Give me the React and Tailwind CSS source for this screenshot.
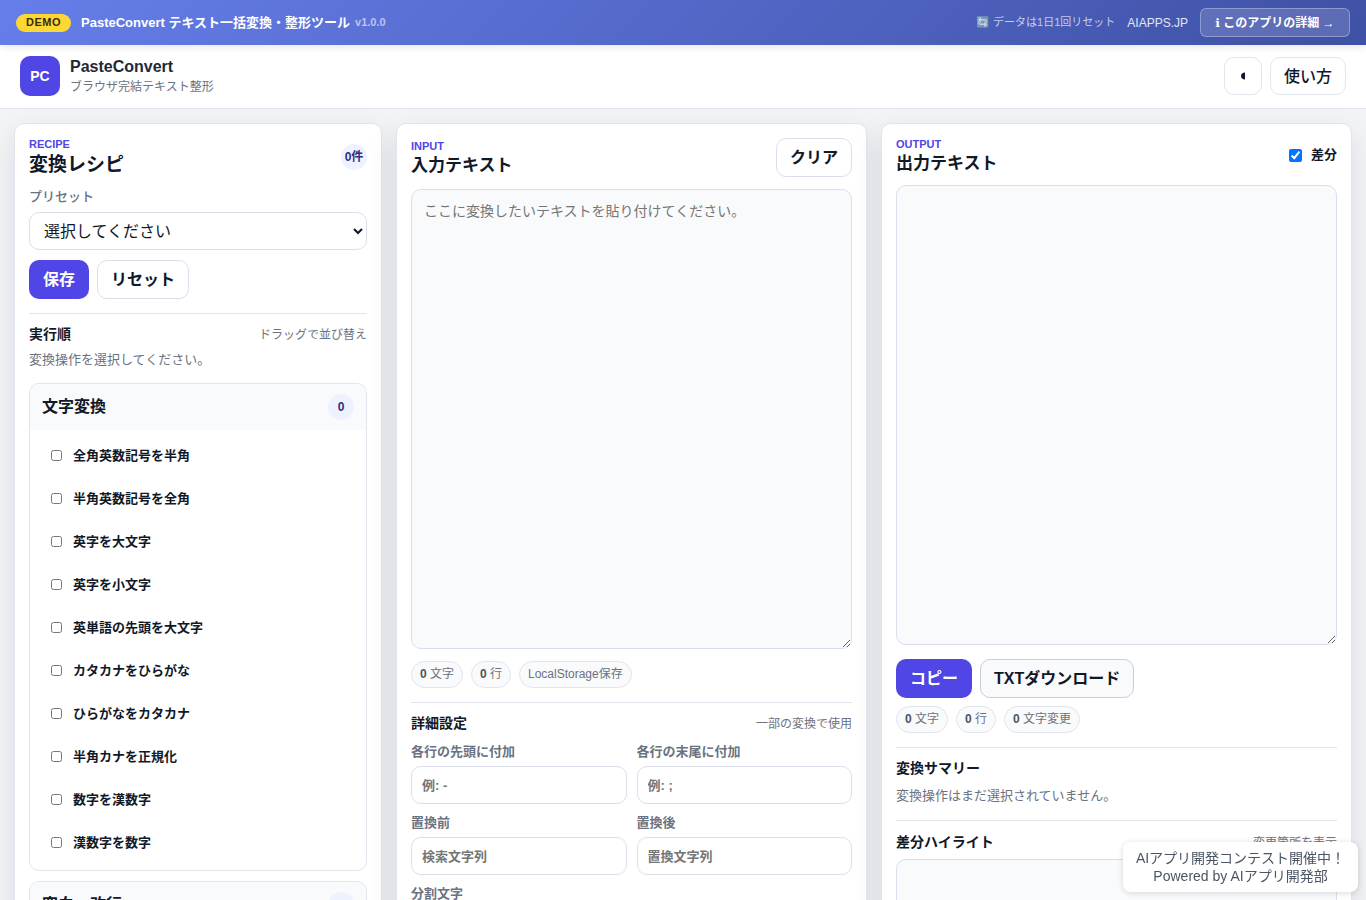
const ops = ["全角英数記号を半角","半角英数記号を全角","英字を大文字","英字を小文字","英単語の先頭を大文字","カタカナをひらがな","ひらがなをカタカナ","半角カナを正規化","数字を漢数字","漢数字を数字"];

function Eyebrow({ children }) {
  return <div className="text-[11px] leading-[12px] mb-[3px] font-bold text-[#4f46e5]">{children}</div>;
}
function Pill({ n, label }) {
  return (
    <span className="h-[27px] px-2 pb-px rounded-full border border-[#e2e4ee] bg-[#f8fafc] text-[12px] text-[#6b7280] flex items-center gap-[3.3px]">
      {n && <b className="text-[#4b5563]">{n}</b>}<span>{label}</span>
    </span>
  );
}
function Field({ label, placeholder }) {
  return (
    <div className="flex flex-col gap-[5px] min-w-0">
      <label className="text-[13px] leading-[19px] font-semibold text-[#6b7280]">{label}</label>
      <input placeholder={placeholder} className="w-full h-[38px] px-[10px] rounded-[10px] border border-[#dcdfeb] bg-white text-[13px] font-semibold placeholder:text-[#757575] outline-none" />
    </div>
  );
}
const Card = ({ children }) => (
  <section className="rounded-[10px] border border-[#e2e4ee] bg-white p-[14px] shadow-[0_10px_30px_rgba(15,23,42,0.1)] min-w-0">{children}</section>
);

export default function App() {
  return (
    <div className="h-screen overflow-hidden bg-[#f3f4f6] text-[#111827] font-['Liberation_Sans','Noto_Sans_CJK_JP',sans-serif]">
      <header className="relative z-10 h-[45px] px-4 flex items-center justify-between text-white bg-[linear-gradient(135deg,#667eea,#3f51a5)] shadow-[0_2px_8px_rgba(0,0,0,0.1)]">
        <div className="flex items-center gap-[10px]">
          <span className="h-[18px] px-[10px] rounded-full bg-[#fdd835] text-[#3b2a06] text-[11px] font-bold tracking-[0.5px] flex items-center">DEMO</span>
          <span className="text-[13px] font-semibold">PasteConvert テキスト一括変換・整形ツール</span>
          <span className="text-[11px] font-semibold text-white/60 -ml-[5px]">v1.0.0</span>
        </div>
        <div className="flex items-center gap-3">
          <span className="text-[11px] text-white/70">🔄 データは1日1回リセット</span>
          <span className="text-[12px] text-white/85">AIAPPS.JP</span>
          <button className="h-[29px] w-[150px] rounded-[6px] border border-white/30 bg-white/15 text-[12px] font-semibold"><span className="font-['DejaVu_Sans'] font-bold">ℹ</span> このアプリの詳細 <span className="font-normal">→</span></button>
        </div>
      </header>

      <nav className="h-[64px] px-5 pb-px flex items-center justify-between bg-white border-b border-[#e2e4ee]">
        <div className="flex items-center gap-[10px]">
          <div className="w-10 h-10 rounded-[10px] bg-[#4f46e5] text-white text-[14px] font-bold flex items-center justify-center">PC</div>
          <div>
            <div className="text-[16px] leading-[20px] font-bold text-[#1f2937]">PasteConvert</div>
            <div className="mt-px -mb-px text-[12px] leading-[18px] text-[#6b7280]">ブラウザ完結テキスト整形</div>
          </div>
        </div>
        <div className="flex items-center gap-2">
          <button className="w-[38px] h-[38px] rounded-[10px] border border-[#e2e4ee] bg-white flex items-center justify-center">
            <svg width="6" height="8" viewBox="0 0 6 8"><path d="M5 0.500C2.500 0.500 1 2 1 4s1.500 3.500 4 3.500z" fill="#111827" /></svg>
          </button>
          <button className="h-[38px] px-[13px] pt-[2px] rounded-[10px] border border-[#e2e4ee] bg-white text-[16px] font-medium">使い方</button>
        </div>
      </nav>

      <main className="grid grid-cols-[368px_1fr_1fr] gap-[14px] px-[14px] pt-[14px] items-start">
        <Card>
          <div className="flex items-center justify-between">
            <div className="-mb-px">
              <Eyebrow>RECIPE</Eyebrow>
              <h2 className="text-[19px] leading-[24px] font-bold">変換レシピ</h2>
            </div>
            <span className="w-[26px] h-[26px] rounded-full bg-[#eef2ff] text-[#312e81] text-[12px] font-bold flex items-center justify-center">0件</span>
          </div>
          <label className="block mt-[11px] text-[13px] leading-[19px] text-[#6b7280] font-medium">プリセット</label>
          <select className="mt-[6px] w-full h-[38px] px-[10px] rounded-[10px] border border-[#dcdfeb] bg-white text-[16px]">
            <option>選択してください</option>
          </select>
          <div className="flex gap-2 mt-[10px]">
            <button className="h-[39px] px-[14px] rounded-[10px] bg-[#4f46e5] text-white text-[16px] font-bold">保存</button>
            <button className="h-[39px] px-[13px] rounded-[10px] border border-[#dcdfeb] bg-white text-[16px] font-bold">リセット</button>
          </div>
          <hr className="mt-[14px] border-[#e2e4ee]" />
          <div className="mt-[10px] flex items-center justify-between">
            <span className="text-[14px] leading-[20px] font-bold">実行順</span>
            <span className="pt-[2px] text-[12px] text-[#6b7280]">ドラッグで並び替え</span>
          </div>
          <p className="mt-[6px] text-[13px] leading-[19px] text-[#6b7280]">変換操作を選択してください。</p>
          <div className="mt-[14px] rounded-[10px] border border-[#e2e4ee] overflow-hidden">
            <div className="h-[46px] px-3 bg-[#f8fafc] flex items-center justify-between">
              <span className="text-[16px] font-bold">文字変換</span>
              <span className="w-[26px] h-[26px] rounded-full bg-[#eef2ff] text-[#312e81] text-[12px] font-bold flex items-center justify-center">0</span>
            </div>
            <div className="pt-[4px] pb-[6px]">
              {ops.map((o) => (
                <label key={o} className="h-[43px] pl-[21px] flex items-center gap-[11px] text-[13px] font-semibold">
                  <input type="checkbox" className="m-0 w-[11px] h-[11px]" />{o}
                </label>
              ))}
            </div>
          </div>
          <div className="mt-[10px] rounded-[10px] border border-[#e2e4ee] overflow-hidden">
            <div className="h-[46px] px-3 bg-[#f8fafc] flex items-center justify-between">
              <span className="text-[16px] font-bold">空白・改行</span>
              <span className="w-[26px] h-[26px] rounded-full bg-[#eef2ff] text-[#312e81] text-[12px] font-bold flex items-center justify-center">0</span>
            </div>
          </div>
        </Card>

        <Card>
          <div className="flex items-center justify-between">
            <div className="-mb-px">
              <Eyebrow>INPUT</Eyebrow>
              <h2 className="text-[17px] leading-[22px] font-bold">入力テキスト</h2>
            </div>
            <button className="h-[39px] px-[13px] rounded-[10px] border border-[#dcdfeb] bg-white text-[16px] font-bold">クリア</button>
          </div>
          <textarea placeholder="ここに変換したいテキストを貼り付けてください。" className="block mt-3 w-full h-[460px] px-3 py-[11px] rounded-[10px] border border-[#dcdfeb] bg-[#f8fafc] text-[14px] placeholder:text-[#757575] outline-none" />
          <div className="flex gap-2 mt-3">
            <Pill n="0" label="文字" /><Pill n="0" label="行" /><Pill label="LocalStorage保存" />
          </div>
          <hr className="mt-[14px] border-[#e2e4ee]" />
          <div className="mt-[10px] flex items-center justify-between">
            <span className="text-[14px] leading-[20px] font-bold">詳細設定</span>
            <span className="pt-[2px] text-[12px] text-[#6b7280]">一部の変換で使用</span>
          </div>
          <div className="mt-[9px] grid grid-cols-2 gap-x-[10px] gap-y-[9px]">
            <Field label="各行の先頭に付加" placeholder="例: -" />
            <Field label="各行の末尾に付加" placeholder="例: ;" />
            <Field label="置換前" placeholder="検索文字列" />
            <Field label="置換後" placeholder="置換文字列" />
            <Field label="分割文字" placeholder="" />
          </div>
        </Card>

        <Card>
          <div className="flex items-center justify-between">
            <div className="-mb-px">
              <Eyebrow>OUTPUT</Eyebrow>
              <h2 className="text-[17px] leading-[22px] font-bold">出力テキスト</h2>
            </div>
            <label className="flex items-center gap-[9px] text-[13px] font-semibold mb-[2px]">
              <input type="checkbox" defaultChecked className="m-0 w-[13px] h-[13px]" />差分
            </label>
          </div>
          <textarea className="block mt-[11px] w-full h-[460px] p-3 rounded-[10px] border border-[#dcdfeb] bg-[#f8fafc] outline-none" />
          <div className="flex gap-2 mt-[14px]">
            <button className="h-[39px] px-[14px] rounded-[10px] bg-[#4f46e5] text-white text-[16px] font-bold">コピー</button>
            <button className="h-[39px] px-[13px] rounded-[10px] border border-[#c9cede] bg-[#f8fafc] text-[16px] font-bold">TXTダウンロード</button>
          </div>
          <div className="flex gap-2 mt-2">
            <Pill n="0" label="文字" /><Pill n="0" label="行" /><Pill n="0" label="文字変更" />
          </div>
          <hr className="mt-[14px] border-[#e2e4ee]" />
          <div className="mt-[10px] text-[14px] leading-[20px] font-bold">変換サマリー</div>
          <p className="mt-[8px] text-[13px] leading-[19px] text-[#6b7280]">変換操作はまだ選択されていません。</p>
          <hr className="mt-[15px] border-[#e2e4ee]" />
          <div className="mt-[11px] flex items-center justify-between">
            <span className="text-[14px] leading-[20px] font-bold">差分ハイライト</span>
            <span className="pt-[2px] text-[12px] text-[#6b7280]">変更箇所を表示</span>
          </div>
          <div className="mt-[7px] h-[200px] rounded-[10px] border border-[#dcdfeb] bg-[#f8fafc]" />
        </Card>
      </main>

      <div className="fixed right-2 bottom-2 w-[235px] h-[50px] pb-px rounded-[8px] bg-white shadow-[0_1px_6px_rgba(0,0,0,0.15)] flex flex-col items-center justify-center text-[14px] leading-[18px] text-[#4b5563] text-center">
        <div>AIアプリ開発コンテスト開催中！</div>
        <div>Powered by AIアプリ開発部</div>
      </div>
    </div>
  );
}
